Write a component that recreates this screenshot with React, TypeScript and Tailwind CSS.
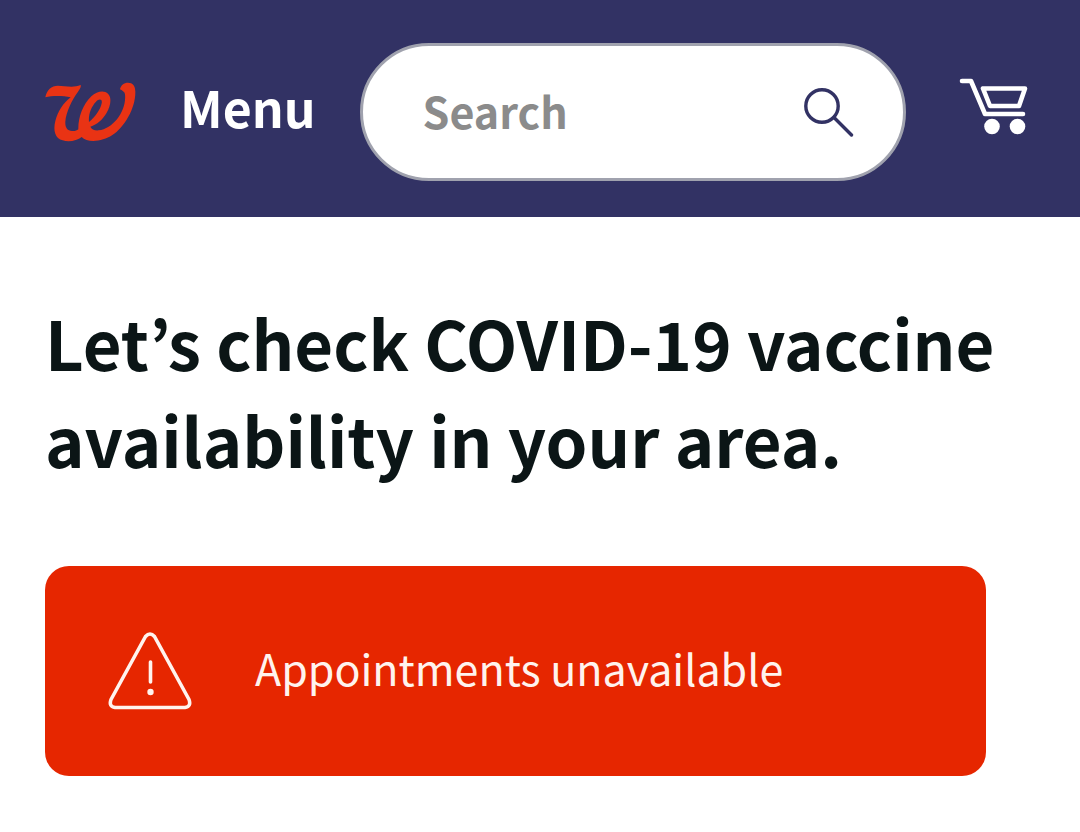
import React from "react";

const LogoIcon: React.FC = () => (
  <svg viewBox="45 51 273 180" className="h-15 w-[91px]" aria-hidden="true">
    <path
      fill="#e93314"
      fillRule="evenodd"
      d="M46 97C50 75 64 62 84 62C104 62 128 70 152 60C154 66 150 72 144 80C126 104 108 142 106 170C105 188 112 197 126 198C134 199 140 197 145 193C144 160 158 118 184 94C200 79 222 75 234 86C246 98 242 122 230 143C218 164 201 178 181 185C184 193 194 197 206 196C250 191 290 138 285 88C284 80 278 78 270 73C272 61 282 53 294 53C308 53 316 62 316 80C317 128 284 186 246 211C220 229 172 235 155 216C138 231 100 233 84 219C72 208 71 188 76 168C84 138 100 114 122 97C98 92 66 92 46 97ZM177 171C196 156 211 134 215 115C218 100 206 101 198 110C183 126 175 148 177 171Z"
    />
  </svg>
);

const SearchIcon: React.FC = () => (
  <svg
    viewBox="0 0 50 50"
    className="size-[50px]"
    fill="none"
    stroke="#323264"
    strokeWidth="3.4"
    aria-hidden="true"
  >
    <circle cx="18" cy="19" r="16.2" />
    <path d="M30 30.500L47.500 48" strokeLinecap="round" />
  </svg>
);

const CartIcon: React.FC = () => (
  <svg
    viewBox="0 0 70 58"
    className="h-[58px] w-[70px]"
    fill="none"
    stroke="#fff"
    strokeWidth="4.6"
    strokeLinecap="round"
    strokeLinejoin="round"
    aria-hidden="true"
  >
    <path d="M3 4H12L26 37H64" />
    <path d="M24 11.500H66L60 29H31Z" />
    <circle cx="33" cy="49.500" r="7.800" fill="#fff" stroke="none" />
    <circle cx="58.500" cy="49.500" r="7.800" fill="#fff" stroke="none" />
  </svg>
);

const WarningIcon: React.FC = () => (
  <svg
    viewBox="0 0 84 78"
    className="h-[78px] w-[84px] shrink-0"
    fill="none"
    stroke="#fff3ee"
    strokeWidth="3.6"
    strokeLinecap="round"
    strokeLinejoin="round"
    aria-hidden="true"
  >
    <path d="M37.500 4.500Q42 -.5 46.500 4.500L81 67.500Q83.500 74.500 77 75.500H7Q.5 74.500 3 67.500Z" />
    <path d="M42.500 30V50" />
    <circle cx="42.500" cy="60" r="3.200" fill="#fff3ee" stroke="none" />
  </svg>
);

const Header: React.FC = () => (
  <header className="flex items-center bg-[#323264] pt-[43px] pr-[51px] pb-9 pl-[45px]">
    <a href="#" aria-label="Home">
      <LogoIcon />
    </a>
    <button
      type="button"
      className="ml-11 pb-3 text-[50px] leading-[60px] font-bold text-white"
    >
      Menu
    </button>
    <form
      role="search"
      className="ml-11 flex h-[138px] min-w-0 flex-1 items-center rounded-full border-3 border-[#a0a2ae] bg-white pr-[49px] pl-15"
    >
      <input
        type="search"
        aria-label="Search"
        placeholder="Search"
        className="h-16 min-w-0 flex-1 bg-transparent pb-1 text-[43px] font-bold text-[#323264] outline-none placeholder:text-[#8b8b8b]"
      />
      <button type="submit" aria-label="Submit search">
        <SearchIcon />
      </button>
    </form>
    <a href="#" aria-label="Cart" className="ml-[53px] pb-3">
      <CartIcon />
    </a>
  </header>
);

export default function App() {
  return (
    <div className="min-h-screen bg-white font-['Noto_Sans_CJK_KR',sans-serif]">
      <Header />
      <main className="px-[45px] pt-19 pb-14">
        <h1 className="text-[67px] leading-[97px] font-bold text-[#0b1516]">
          Let’s check COVID-19 vaccine availability in your area.
        </h1>
        <div
          role="alert"
          className="mt-[79px] mr-[49px] flex h-[210px] items-center gap-[63px] rounded-3xl bg-[#e62600] px-[63px]"
        >
          <WarningIcon />
          <p className="pb-2 text-[43px] leading-[60px] text-[#fff3ee]">
            Appointments unavailable
          </p>
        </div>
      </main>
    </div>
  );
}
